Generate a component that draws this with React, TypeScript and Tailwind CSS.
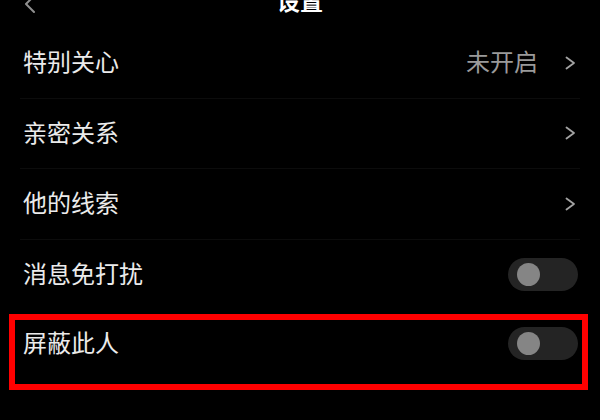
import React from "react";

const font = { fontFamily: '"Noto Sans CJK SC", "Noto Sans", sans-serif' };

function Chevron() {
  return (
    <svg width="11" height="14" viewBox="0 0 11 14" fill="none" className="shrink-0">
      <polyline points="1.5,1.5 9,7 1.5,12.5" stroke="#a3a3a3" strokeWidth="1.8" strokeLinecap="round" strokeLinejoin="round" />
    </svg>
  );
}

function Toggle() {
  return (
    <div className="w-[70px] h-[33px] rounded-full bg-[#242424] flex items-center pl-[9px]">
      <div className="w-[23px] h-[23px] rounded-full bg-[#858585]" />
    </div>
  );
}

type Row = { label: string; value?: string; kind: "link" | "toggle"; divider?: boolean };

const rows: Row[] = [
  { label: "特别关心", value: "未开启", kind: "link", divider: true },
  { label: "亲密关系", kind: "link", divider: true },
  { label: "他的线索", kind: "link", divider: true },
  { label: "消息免打扰", kind: "toggle" },
  { label: "屏蔽此人", kind: "toggle" },
];

export default function App() {
  return (
    <div className="w-[600px] h-[420px] bg-black overflow-hidden text-[#ebebeb]" style={font}>
      {/* top bar, scrolled mostly out of view */}
      <div className="relative h-[28px] flex justify-center">
        <svg width="14" height="20" viewBox="0 0 14 20" fill="none" className="absolute left-[23px] top-[-6px]">
          <polyline points="11,2 3,10 11,18" stroke="#8f8f8f" strokeWidth="2" strokeLinecap="round" strokeLinejoin="round" />
        </svg>
        <span className="text-[23px] font-bold leading-[26px] mt-[-13px] text-white">设置</span>
      </div>

      {rows.map((r, i) => (
        <div key={r.label} className="relative">
          <div className="h-[69.5px] flex items-center pl-[23px] pr-[24px]">
            <span className="text-[24px] leading-none flex-1 pb-[3px]">{r.label}</span>
            {r.kind === "link" ? (
              <div className="flex items-center">
                {r.value && <span className="text-[24px] leading-none text-[#9a9a9a] mr-[27px] pb-[3px]">{r.value}</span>}
                <Chevron />
              </div>
            ) : (
              <div className="mr-[-2px]">
                <Toggle />
              </div>
            )}
          </div>
          {r.divider && <div className="mx-[20px] h-px bg-[#0c0c0c]" />}
          {i === 4 && (
            <div className="absolute left-[9px] right-[12px] top-[5px] h-[76px] border-[6px] border-[#ff0000]" />
          )}
        </div>
      ))}
    </div>
  );
}
